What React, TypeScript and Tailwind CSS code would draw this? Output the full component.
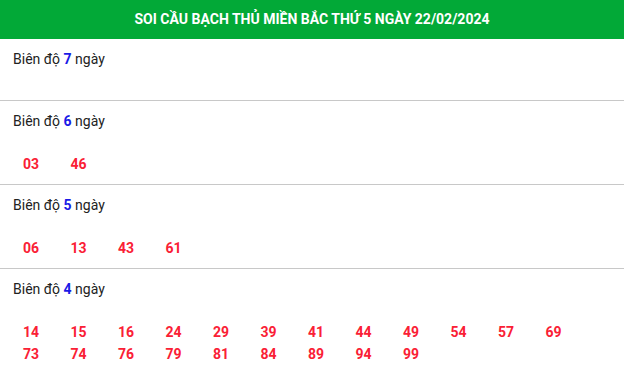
const SECTIONS: { days: number; nums: string[] }[] = [
  { days: 7, nums: [] },
  { days: 6, nums: ["03", "46"] },
  { days: 5, nums: ["06", "13", "43", "61"] },
  {
    days: 4,
    nums: [
      "14", "15", "16", "24", "29", "39", "41", "44", "49", "54", "57", "69",
      "73", "74", "76", "79", "81", "84", "89", "94", "99",
    ],
  },
];

function Section({ days, nums }: { days: number; nums: string[] }) {
  return (
    <div
      className={`border-b border-[#c8c8c8] pt-[9px] ${
        nums.length ? "pb-[9px]" : "pb-[30px]"
      }`}
    >
      <p className="pl-[13px] text-[14px] leading-[22px] text-[#222]">
        Biên độ <span className="font-bold text-[#1a1ae6]">{days}</span> ngày
      </p>
      {nums.length > 0 && (
        <div className="mt-[21px] grid grid-cols-[repeat(12,47.5px)] pl-[23px]">
          {nums.map((n) => (
            <span
              key={n}
              className="text-[14px] font-bold leading-[22px] text-[#fa2035]"
            >
              {n}
            </span>
          ))}
        </div>
      )}
    </div>
  );
}

export default function App() {
  return (
    <div
      className="h-[372px] w-[624px] overflow-hidden bg-white"
      style={{ fontFamily: "Roboto, 'Noto Sans', sans-serif" }}
    >
      <div className="flex h-[39px] items-center justify-center bg-[#02a937]">
        <h1 className="text-[14px] font-bold uppercase text-white">
          SOI CẦU BẠCH THỦ MIỀN BẮC THỨ 5 NGÀY 22/02/2024
        </h1>
      </div>
      {SECTIONS.map((s) => (
        <Section key={s.days} days={s.days} nums={s.nums} />
      ))}
    </div>
  );
}
